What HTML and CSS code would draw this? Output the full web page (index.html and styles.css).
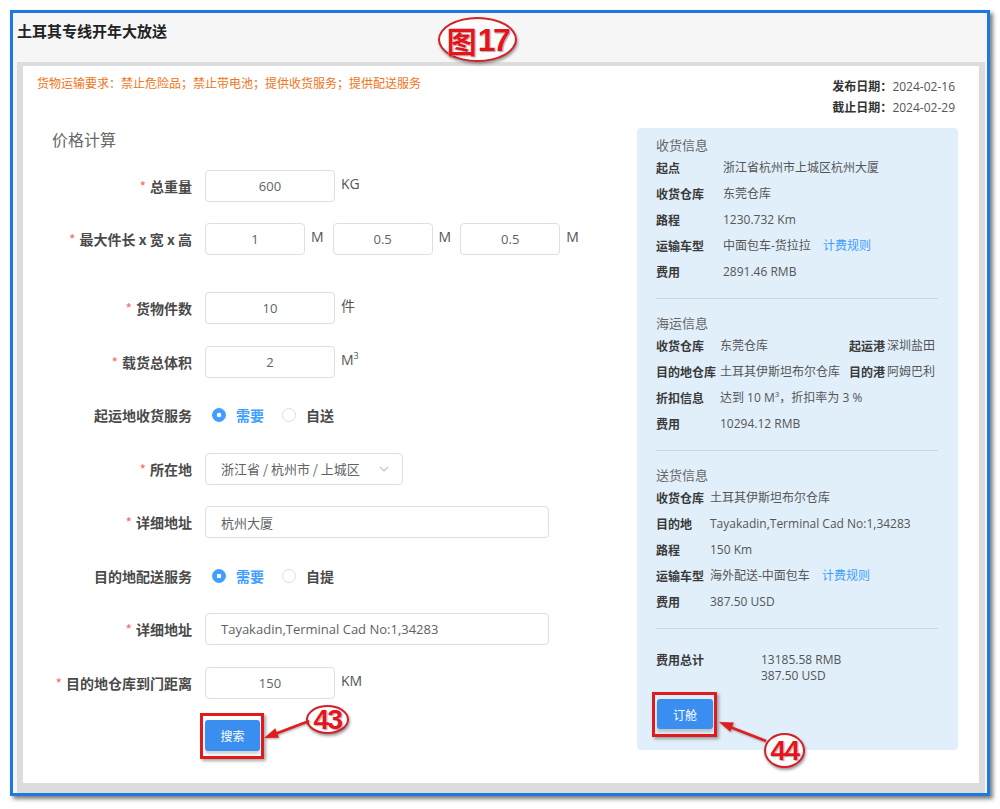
FILE: index.html
```html
<!DOCTYPE html>
<html lang="zh-CN">
<head>
<meta charset="utf-8">
<title>土耳其专线开年大放送</title>
<link rel="stylesheet" href="styles.css">
</head>
<body>
<div class="frame">
  <div class="frame-head"><h1>土耳其专线开年大放送</h1></div>
  <div class="frame-body">
    <div class="card">
      <div class="card-top">
        <p class="note">货物运输要求：禁止危险品；禁止带电池；提供收货服务；提供配送服务</p>
        <div class="dates">
          <div><b>发布日期：</b>2024-02-16</div>
          <div><b>截止日期：</b>2024-02-29</div>
        </div>
      </div>
      <div class="card-main">
        <div class="calc">
          <h2>价格计算</h2>
          <div class="row r1">
            <label class="lbl req">总重量</label>
            <span class="inp c w130">600</span><span class="unit">KG</span>
          </div>
          <div class="row tall">
            <label class="lbl req">最大件长 x 宽 x 高</label>
            <span class="inp c w100">1</span><span class="unit">M</span>
            <span class="inp c w100">0.5</span><span class="unit">M</span>
            <span class="inp c w100">0.5</span><span class="unit">M</span>
          </div>
          <div class="row">
            <label class="lbl req">货物件数</label>
            <span class="inp c w130">10</span><span class="unit">件</span>
          </div>
          <div class="row">
            <label class="lbl req">载货总体积</label>
            <span class="inp c w130">2</span><span class="unit">M<sup>3</sup></span>
          </div>
          <div class="row">
            <label class="lbl">起运地收货服务</label>
            <div class="radios">
              <span class="radio on"><i class="dot"></i>需要</span>
              <span class="radio"><i class="dot"></i>自送</span>
            </div>
          </div>
          <div class="row">
            <label class="lbl req">所在地</label>
            <span class="inp sel w198">浙江省 / 杭州市 / 上城区
              <svg class="chev" width="12" height="12" viewBox="0 0 12 12"><polyline points="2,4 6,8 10,4" fill="none" stroke="#c0c4cc" stroke-width="1.2"/></svg>
            </span>
          </div>
          <div class="row">
            <label class="lbl req">详细地址</label>
            <span class="inp l w344">杭州大厦</span>
          </div>
          <div class="row">
            <label class="lbl">目的地配送服务</label>
            <div class="radios">
              <span class="radio on"><i class="dot"></i>需要</span>
              <span class="radio"><i class="dot"></i>自提</span>
            </div>
          </div>
          <div class="row">
            <label class="lbl req">详细地址</label>
            <span class="inp l w344">Tayakadin,Terminal Cad No:1,34283</span>
          </div>
          <div class="row">
            <label class="lbl req">目的地仓库到门距离</label>
            <span class="inp c w130">150</span><span class="unit">KM</span>
          </div>
          <div class="actions">
            <span class="btn-wrap"><button class="btn">搜索</button><span class="mark"></span></span>
          </div>
        </div>
        <aside class="summary">
          <h3>收货信息</h3>
          <div class="kv s1">
            <b>起点</b><span>浙江省杭州市上城区杭州大厦</span>
            <b>收货仓库</b><span>东莞仓库</span>
            <b>路程</b><span>1230.732 Km</span>
            <b>运输车型</b><span>中面包车-货拉拉<a class="link">计费规则</a></span>
            <b>费用</b><span>2891.46 RMB</span>
          </div>
          <hr>
          <h3>海运信息</h3>
          <div class="kv s2">
            <b>收货仓库</b><span>东莞仓库</span><b>起运港</b><span>深圳盐田</span>
            <b>目的地仓库</b><span>土耳其伊斯坦布尔仓库</span><b>目的港</b><span>阿姆巴利</span>
            <b>折扣信息</b><span class="span3">达到 10 M<sup>3</sup>，折扣率为 3 %</span>
            <b>费用</b><span class="span3">10294.12 RMB</span>
          </div>
          <hr>
          <h3>送货信息</h3>
          <div class="kv s3">
            <b>收货仓库</b><span>土耳其伊斯坦布尔仓库</span>
            <b>目的地</b><span>Tayakadin,Terminal Cad No:1,34283</span>
            <b>路程</b><span>150 Km</span>
            <b>运输车型</b><span>海外配送-中面包车<a class="link">计费规则</a></span>
            <b>费用</b><span>387.50 USD</span>
          </div>
          <hr>
          <div class="total">
            <b>费用总计</b>
            <span>13185.58 RMB<br>387.50 USD</span>
          </div>
          <div class="book">
            <span class="btn-wrap"><button class="btn">订舱</button><span class="mark"></span></span>
          </div>
        </aside>
      </div>
    </div>
  </div>
</div>

<div class="anno a17"><span class="fig">图</span><span class="num">17</span></div>
<div class="anno a43"><span class="num">43</span></div>
<div class="anno a44"><span class="num">44</span></div>
<svg class="arrows" width="1000" height="809" viewBox="0 0 1000 809">
  <line x1="309" y1="721" x2="275" y2="734" stroke="#e01e1e" stroke-width="2.5"/>
  <polygon points="264,738 278.9,737.7 275.3,728.3" fill="#e01e1e"/>
  <line x1="766" y1="741" x2="730" y2="727" stroke="#e01e1e" stroke-width="2.5"/>
  <polygon points="719,722 733.8,722.4 730.2,731.8" fill="#e01e1e"/>
</svg>
</body>
</html>
```

FILE: styles.css
```css
html, body {
  margin: 0;
  padding: 0;
  background: #ffffff;
}
body {
  font-family: "Open Sans", "Noto Sans CJK SC", sans-serif;
  color: #555;
  position: relative;
  width: 1000px;
  height: 809px;
  overflow: hidden;
}

.frame {
  margin: 10px 0 0 10px;
  width: 974px;
  height: 780px;
  border: 3px solid #1d78e4;
  background: #f6f6f6;
  box-shadow: 3px 3px 4px rgba(0, 0, 0, 0.5);
  display: flex;
  flex-direction: column;
}

.frame-head {
  height: 49px;
  flex: none;
  padding: 7px 0 0 4px;
  box-sizing: border-box;
}
.frame-head h1 {
  margin: 0;
  font-family: "Noto Sans CJK SC", sans-serif;
  font-size: 15px;
  line-height: 22px;
  font-weight: bold;
  color: #222;
}

.frame-body {
  flex: 1;
  margin: 0 2px 0 4px;
  background: #dcdcdc;
  padding: 4px 6px 10px 6px;
  min-height: 0;
}

.card {
  background: #fff;
  height: 100%;
  box-sizing: border-box;
  padding: 7px 21px 0 14px;
}

.card-top {
  display: flex;
  justify-content: space-between;
  align-items: flex-start;
  height: 55px;
}
.note {
  margin: 0;
  font-size: 12px;
  line-height: 20px;
  color: #f07420;
  font-family: "Noto Sans CJK SC", sans-serif;
}
.dates {
  margin-top: 3px;
  padding-right: 3px;
  font-size: 12px;
  line-height: 20px;
  color: #555;
}
.dates b {
  font-family: "Noto Sans CJK SC", sans-serif;
  color: #333;
}

.card-main {
  display: flex;
  align-items: flex-start;
}

.calc {
  width: 600px;
  flex: none;
}
.calc h2 {
  margin: 0 0 20px;
  padding-left: 15px;
  font-size: 16px;
  line-height: 22px;
  font-weight: normal;
  color: #666;
  font-family: "Noto Sans CJK SC", sans-serif;
}

.row {
  display: flex;
  align-items: center;
  height: 32px;
  margin-bottom: 21.5px;
}
.row.r1 { margin-bottom: 21px; }
.row.tall { margin-bottom: 37px; }

.lbl {
  width: 168px;
  flex: none;
  box-sizing: border-box;
  padding-right: 13px;
  text-align: right;
  font-size: 14px;
  font-weight: bold;
  color: #4a4a4a;
  font-family: "Noto Sans CJK SC", sans-serif;
}
.lbl.req::before {
  content: "*";
  color: #f56c6c;
  margin-right: 4px;
  font-weight: normal;
}

.inp {
  box-sizing: border-box;
  height: 32px;
  border: 1px solid #dcdfe6;
  border-radius: 4px;
  background: #fff;
  font-size: 13px;
  color: #606266;
  display: flex;
  align-items: center;
  flex: none;
}
.inp.c { justify-content: center; }
.inp.l { padding-left: 15px; }
.inp.sel {
  padding: 0 12px 0 15px;
  justify-content: space-between;
  font-family: "Noto Sans CJK SC", sans-serif;
}
.w130 { width: 130px; }
.w100 { width: 100px; }
.w198 { width: 198px; }
.w344 { width: 344px; }

.unit {
  align-self: flex-start;
  margin: 0 9px 0 6px;
  font-size: 14px;
  line-height: 28px;
  color: #555;
}
.unit sup {
  font-size: 9px;
  vertical-align: 6px;
  line-height: 0;
}

.radios {
  display: flex;
  align-items: center;
  padding-left: 7px;
}
.radio {
  display: flex;
  align-items: center;
  margin-right: 18px;
  font-size: 14px;
  font-weight: bold;
  color: #4a4a4a;
  font-family: "Noto Sans CJK SC", sans-serif;
}
.radio .dot {
  width: 14px;
  height: 14px;
  box-sizing: border-box;
  border-radius: 50%;
  border: 1px solid #dcdfe6;
  background: #fff;
  margin-right: 10px;
}
.radio.on { color: #409eff; }
.radio.on .dot {
  border-color: #409eff;
  background: radial-gradient(circle, #fff 0, #fff 2px, #409eff 2.6px);
}

.actions {
  padding-left: 168px;
  margin-top: 0;
}

.btn-wrap {
  position: relative;
  display: inline-block;
  vertical-align: top;
}
.btn {
  display: block;
  width: 55px;
  height: 31px;
  border: 0;
  border-radius: 3px;
  background: #3a8ef0;
  color: #fff;
  font-size: 12px;
  font-family: "Noto Sans CJK SC", sans-serif;
  box-shadow: 0 3px 3px rgba(0, 0, 0, 0.18);
  padding: 0;
}
.mark {
  position: absolute;
  top: -7px;
  right: -4px;
  bottom: -8px;
  left: -5px;
  border: 3px solid #e01b1b;
  box-shadow: 2px 2px 3px rgba(0, 0, 0, 0.35);
}

.summary {
  width: 321px;
  flex: none;
  box-sizing: border-box;
  background: #e1effb;
  border-radius: 4px;
  padding: 8px 20px 21px 19px;
}
.summary h3 {
  margin: 0;
  font-size: 13px;
  line-height: 18px;
  font-weight: normal;
  color: #666;
  font-family: "Noto Sans CJK SC", sans-serif;
}
.kv {
  display: grid;
  grid-auto-rows: 26px;
  align-items: center;
  font-size: 12px;
  color: #555;
}
.kv b, .total b {
  font-family: "Noto Sans CJK SC", sans-serif;
  color: #3a3a3a;
  white-space: nowrap;
}
.kv span { white-space: nowrap; }
.kv sup { font-size: 8px; vertical-align: 5px; line-height: 0; }
.s1 { grid-template-columns: 67px 1fr; }
.s2 { grid-template-columns: 64px 129px 38px 1fr; }
.s2 .span3 { grid-column: 2 / 5; }
.s3 { grid-template-columns: 54px 1fr; }
.link {
  color: #409eff;
  margin-left: 12px;
  font-family: "Noto Sans CJK SC", sans-serif;
}
.summary hr {
  border: 0;
  border-top: 1px solid #cbd6df;
  margin: 14px 0 15px;
}
.total {
  padding-top: 8px;
  display: grid;
  grid-template-columns: 105px 1fr;
  font-size: 12px;
  line-height: 16px;
  color: #555;
}
.book {
  margin-top: 15px;
  padding-left: 1px;
}
.book .btn {
  width: 56px;
  height: 30px;
}

/* annotation overlays */
.anno {
  position: absolute;
  box-sizing: border-box;
  border: 2.5px solid #d42027;
  border-radius: 50%;
  background: #fcfcfc;
  display: flex;
  align-items: center;
  justify-content: center;
  box-shadow: 1px 2px 3px rgba(0, 0, 0, 0.4);
  color: #e3141c;
  font-family: "Liberation Sans", sans-serif;
  font-weight: bold;
  text-shadow: 0 0 1px #fff, 1px 1px 1px rgba(0, 0, 0, 0.35);
  line-height: 1;
}
.anno .num {
  letter-spacing: -1.5px;
}
.a17 {
  left: 438px;
  top: 17px;
  width: 79px;
  height: 45px;
}
.a17 .fig {
  font-family: "Noto Sans CJK SC", sans-serif;
  font-size: 30px;
  font-weight: bold;
}
.a17 .num {
  font-size: 32px;
  letter-spacing: -2.5px;
  margin-left: 1px;
}
.a43 {
  left: 306px;
  top: 705px;
  width: 43px;
  height: 29px;
  font-size: 28px;
}
.a44 {
  left: 764px;
  top: 733px;
  width: 41px;
  height: 35px;
  font-size: 28px;
}
.arrows {
  position: absolute;
  left: 0;
  top: 0;
  pointer-events: none;
  filter: drop-shadow(1px 1px 1px rgba(0, 0, 0, 0.35));
}
```
